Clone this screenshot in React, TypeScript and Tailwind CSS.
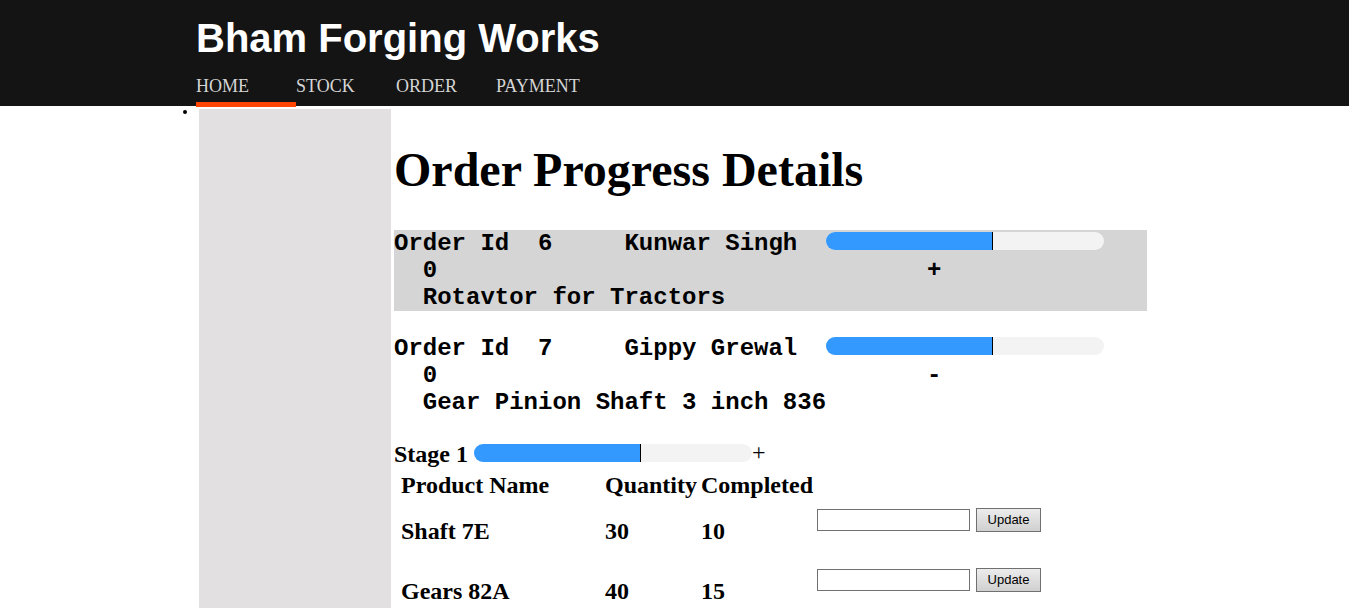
const navItems = ['HOME', 'STOCK', 'ORDER', 'PAYMENT'];

const orders = [
  { id: 6, customer: 'Kunwar Singh', product: 'Rotavtor for Tractors', open: false },
  { id: 7, customer: 'Gippy Grewal', product: 'Gear Pinion Shaft 3 inch 836', open: true },
];

const products = [
  { name: 'Shaft 7E', quantity: 30, completed: 10 },
  { name: 'Gears 82A', quantity: 40, completed: 15 },
];

function Bar({ value, label }: { value: number; label: string }) {
  return (
    <span
      role="progressbar"
      aria-label={label}
      aria-valuenow={value}
      aria-valuemin={0}
      aria-valuemax={100}
      className="mt-0.5 inline-block h-[18px] w-[278px] overflow-hidden rounded-full bg-[#f3f3f3] align-top"
    >
      <span className="block h-full border-r border-black bg-[#3399ff]" style={{ width: `${value}%` }} />
    </span>
  );
}

function OrderRow({ order }: { order: (typeof orders)[number] }) {
  return (
    <pre
      className={`font-['Liberation_Mono',monospace] text-2xl leading-[27px] font-bold ${
        order.open ? '' : 'bg-[#d5d5d5]'
      }`}
    >
      {`Order Id  ${order.id}     ${order.customer}  `}
      <Bar value={60} label={`Progress of order ${order.id}`} />
      {`\n  0${' '.repeat(34)}`}
      <button type="button" aria-expanded={order.open}>
        {order.open ? '-' : '+'}
      </button>
      {`\n  ${order.product}`}
    </pre>
  );
}

export default function App() {
  return (
    <div className="flex min-h-screen flex-col bg-white font-['Liberation_Serif',serif] text-black">
      <header className="bg-[#141414]">
        <div className="mx-auto h-[106px] max-w-[957px]">
          <div className="pt-4 font-['Liberation_Sans',sans-serif] text-[40px] leading-[44px] font-bold text-white">
            Bham Forging Works
          </div>
          <nav className="flex pt-3.5">
            {navItems.map((item, i) => (
              <a
                key={item}
                href="#"
                className={`h-[33px] w-[100px] border-b-[5px] text-lg leading-6 text-[#d5d5d5] ${
                  i === 0 ? 'border-[#ff4500]' : 'border-transparent'
                }`}
              >
                {item}
              </a>
            ))}
          </nav>
        </div>
      </header>

      <ul className="mx-auto flex w-full max-w-[957px] grow flex-col">
        <li className="relative flex grow pt-[3px] pl-[3px]">
          <span className="absolute top-1 -left-[13px] size-1 rounded-full bg-black" />
          <aside className="w-48 shrink-0 bg-[#e2e0e1]" />
          <main className="min-w-0 grow pr-1.5 pl-[3px]">
            <h1 className="pt-[33px] text-5xl leading-[56px] font-bold">Order Progress Details</h1>
            <div className="mt-8 flex flex-col gap-6">
              {orders.map((order) => (
                <OrderRow key={order.id} order={order} />
              ))}
            </div>

            <section className="mt-6 text-2xl leading-7 font-bold">
              <h2 className="flex h-7 items-start">
                <span className="mr-1.5">Stage 1</span>
                <span className="pt-0.5">
                  <Bar value={60} label="Stage 1 progress" />
                </span>
                <button type="button" aria-label="Toggle stage 1" className="leading-6 font-normal">
                  +
                </button>
              </h2>
              <table className="ml-[7px] table-fixed border-collapse text-left">
                <colgroup>
                  <col className="w-[204px]" />
                  <col className="w-24" />
                  <col className="w-[116px]" />
                  <col className="w-[226px]" />
                </colgroup>
                <thead>
                  <tr className="h-[34px] align-middle">
                    <th>Product Name</th>
                    <th>Quantity</th>
                    <th>Completed</th>
                    <td />
                  </tr>
                </thead>
                <tbody>
                  {products.map((product) => (
                    <tr key={product.name} className="align-top">
                      <td className="pt-[15px] pb-[17px]">{product.name}</td>
                      <td className="pt-[15px]">{product.quantity}</td>
                      <td className="pt-[15px]">{product.completed}</td>
                      <td>
                        <form className="flex items-center gap-1.5 pt-1.5 font-['Liberation_Sans',sans-serif] text-[13px] leading-4 font-normal">
                          <input
                            type="text"
                            aria-label={`Completed ${product.name}`}
                            className="h-[22px] w-[153px] border border-[#707070] bg-white px-1"
                          />
                          <button
                            type="button"
                            className="h-6 w-[65px] border border-[#707070] bg-linear-to-b from-[#ececec] to-[#d0d0d0]"
                          >
                            Update
                          </button>
                        </form>
                      </td>
                    </tr>
                  ))}
                </tbody>
              </table>
            </section>
          </main>
        </li>
      </ul>
    </div>
  );
}
